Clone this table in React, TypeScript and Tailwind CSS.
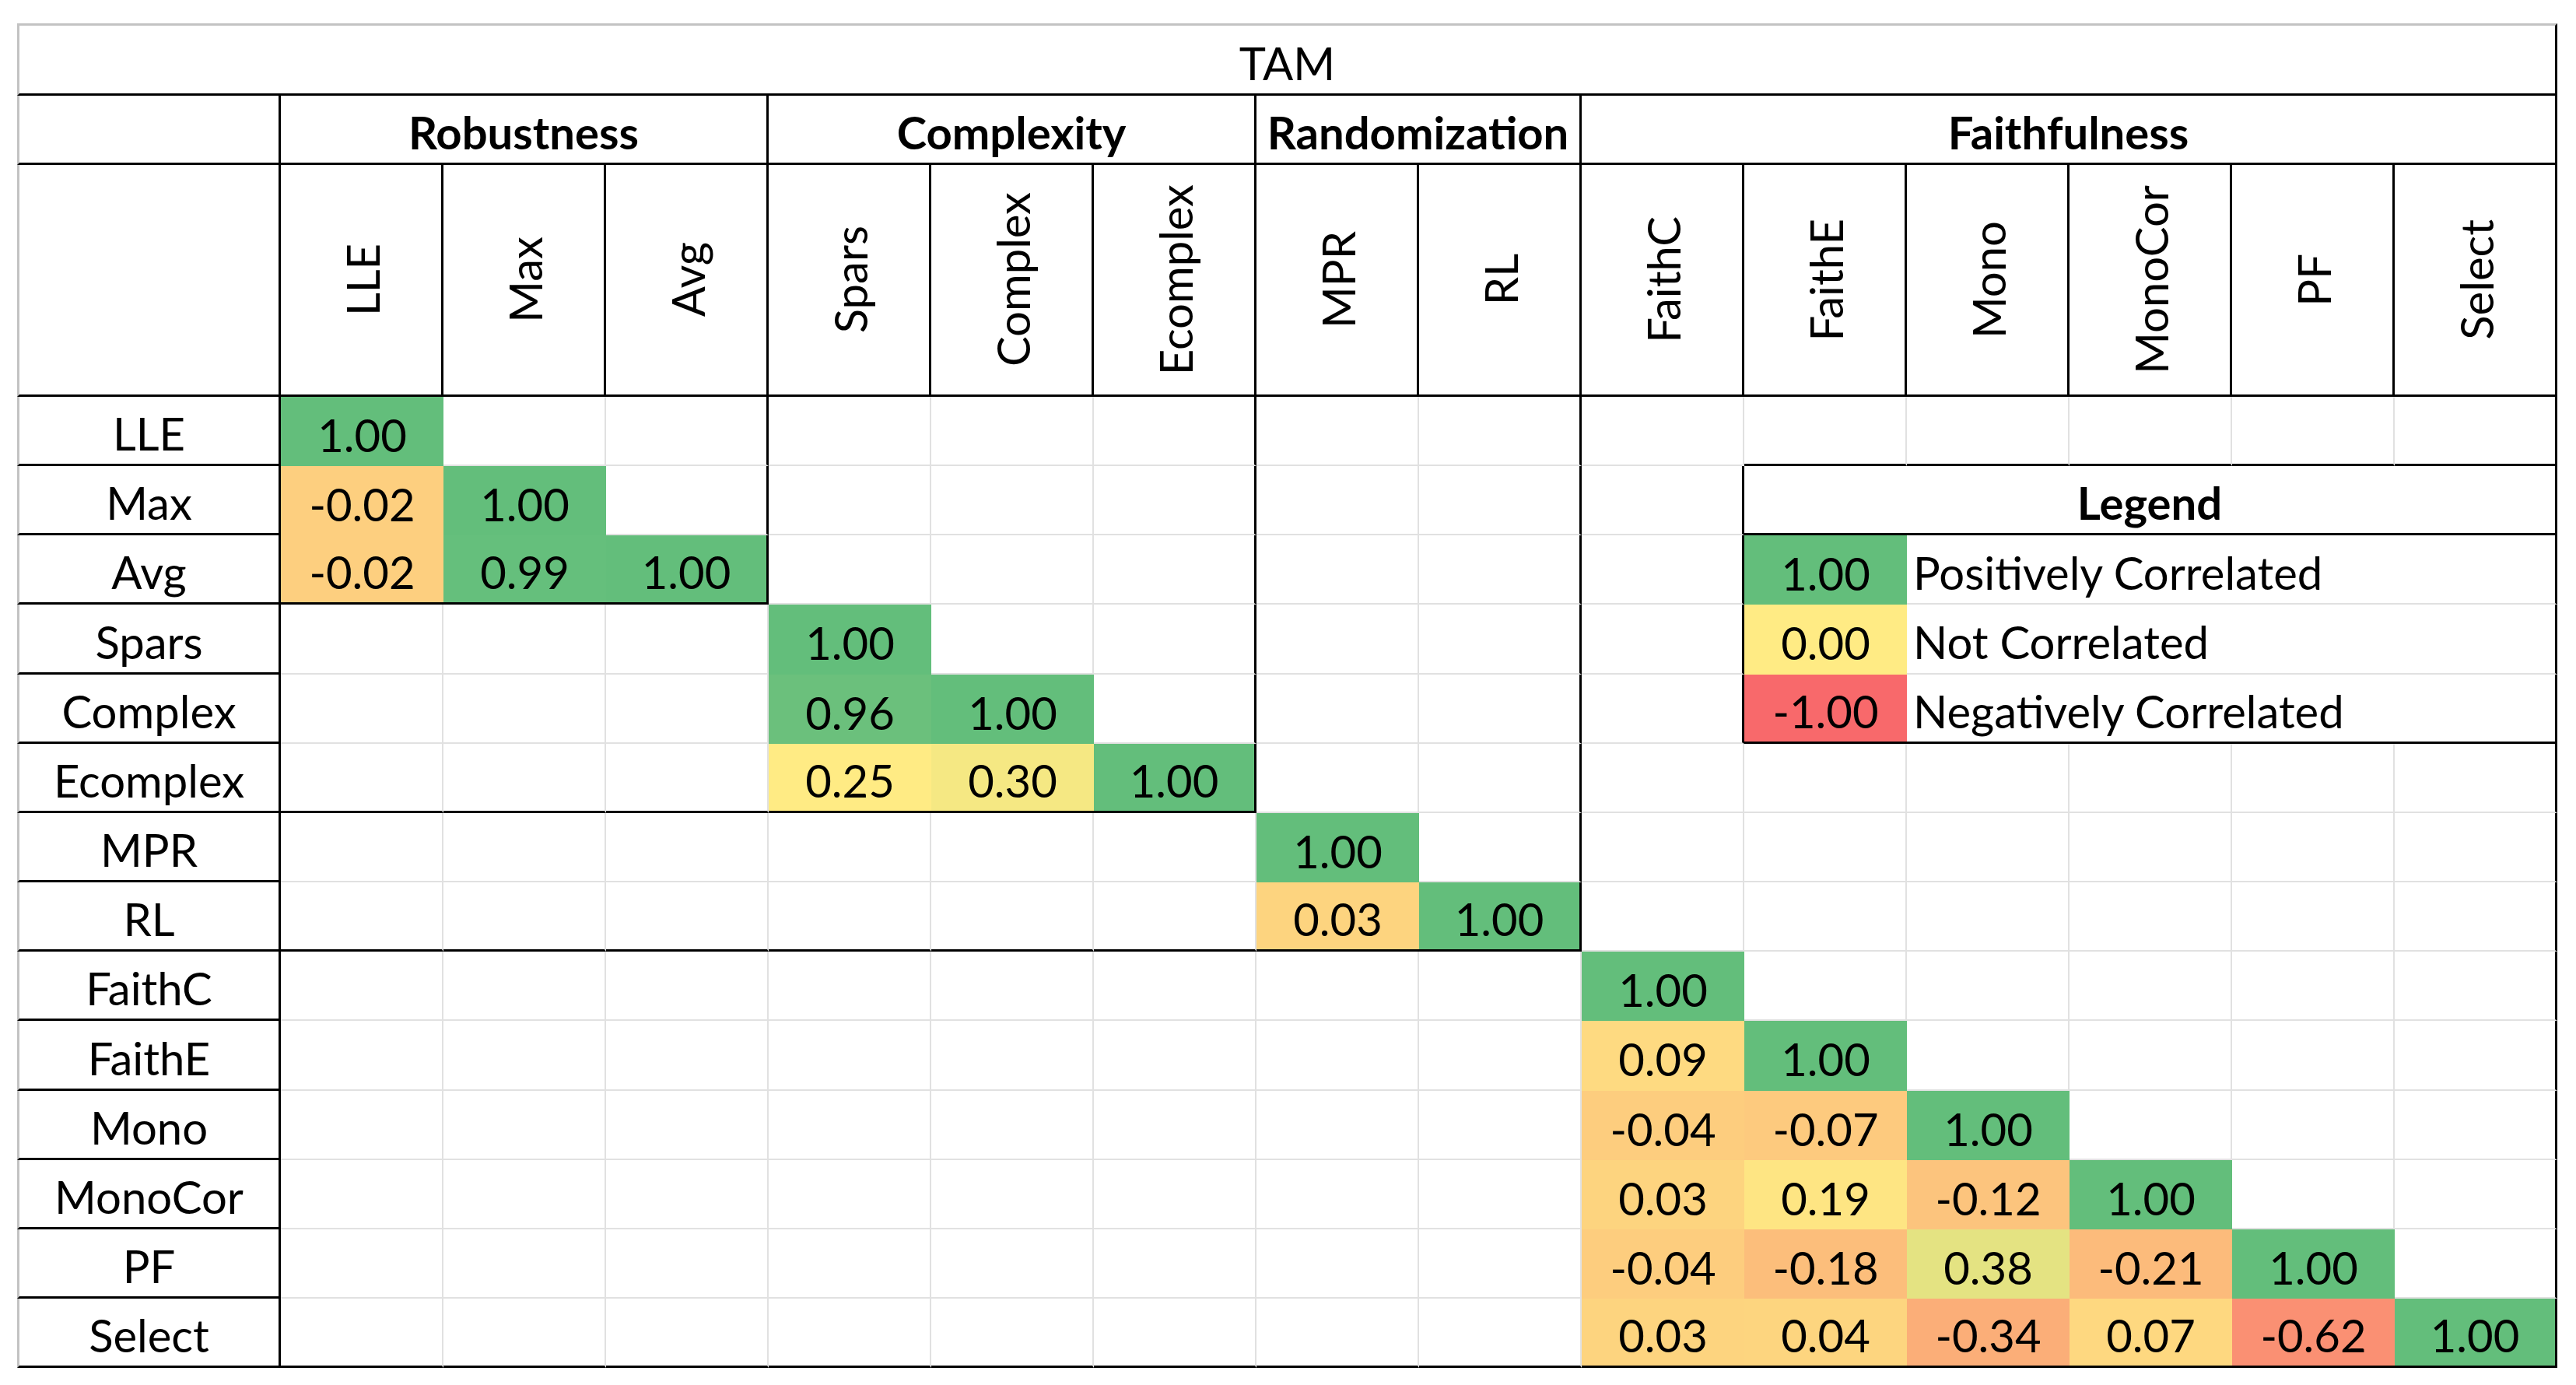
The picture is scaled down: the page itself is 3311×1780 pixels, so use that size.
const ROWS = [
  "LLE",
  "Max",
  "Avg",
  "Spars",
  "Complex",
  "Ecomplex",
  "MPR",
  "RL",
  "FaithC",
  "FaithE",
  "Mono",
  "MonoCor",
  "PF",
  "Select",
];

const GROUPS = [
  { name: "Robustness", start: 0, end: 2, span: "col-span-3" },
  { name: "Complexity", start: 3, end: 5, span: "col-span-3" },
  { name: "Randomization", start: 6, end: 7, span: "col-span-2" },
  { name: "Faithfulness", start: 8, end: 13, span: "col-span-6" },
];

// lower triangle of each block, first entry is the group's first column
const VALUES: string[][] = [
  ["1.00"],
  ["-0.02", "1.00"],
  ["-0.02", "0.99", "1.00"],
  ["1.00"],
  ["0.96", "1.00"],
  ["0.25", "0.30", "1.00"],
  ["1.00"],
  ["0.03", "1.00"],
  ["1.00"],
  ["0.09", "1.00"],
  ["-0.04", "-0.07", "1.00"],
  ["0.03", "0.19", "-0.12", "1.00"],
  ["-0.04", "-0.18", "0.38", "-0.21", "1.00"],
  ["0.03", "0.04", "-0.34", "0.07", "-0.62", "1.00"],
];

// colour scale fills, one per value
const FILL: Record<string, string> = {
  "1.00": "bg-[#63be7b]",
  "0.99": "bg-[#65bf7c]",
  "0.96": "bg-[#6bc07c]",
  "0.38": "bg-[#e4e382]",
  "0.30": "bg-[#f5e883]",
  "0.25": "bg-[#ffeb84]",
  "0.19": "bg-[#fee583]",
  "0.09": "bg-[#feda81]",
  "0.07": "bg-[#fed880]",
  "0.04": "bg-[#fdd57f]",
  "0.03": "bg-[#fdd47f]",
  "-0.02": "bg-[#fdcf7f]",
  "-0.04": "bg-[#fdcd7e]",
  "-0.07": "bg-[#fdca7e]",
  "-0.12": "bg-[#fcc47d]",
  "-0.18": "bg-[#fcbe7b]",
  "-0.21": "bg-[#fcbb7b]",
  "-0.34": "bg-[#fbae78]",
  "-0.62": "bg-[#fa9073]",
};

const LEGEND = [
  { value: "1.00", label: "Positively Correlated", fill: "bg-[#63be7b]" },
  { value: "0.00", label: "Not Correlated", fill: "bg-[#ffeb84]" },
  { value: "-1.00", label: "Negatively Correlated", fill: "bg-[#f8696b]" },
];

const R_BLACK = "border-r-[3px] border-r-black";
const R_GRAY = "border-r-2 border-r-[#e1e1e1]";
const B_BLACK = "border-b-[3px] border-b-black";
const B_GRAY = "border-b-2 border-b-[#e1e1e1]";
const LEFT_EDGE = "border-l-[3px] border-l-[#c3c3c3]";
const TEXT = "flex items-center justify-center pt-[8px] whitespace-nowrap";

const groupOf = (r: number) => GROUPS.find((g) => r >= g.start && r <= g.end)!;

const valueAt = (r: number, c: number) => {
  const g = groupOf(r);
  if (c < g.start || c > r) return null;
  return VALUES[r][c - g.start];
};

const rightBlack = (r: number, c: number) =>
  GROUPS.some((g) => g.end === c && r <= g.end) || (c === 8 && r >= 1 && r <= 4);

const bottomBlack = (r: number, c: number) =>
  GROUPS.some((g) => g.end === r && c <= g.end) || (r === 0 && c >= 9);

const DataCell = ({ r, c }: { r: number; c: number }) => {
  const v = valueAt(r, c);
  const right = rightBlack(r, c) ? R_BLACK : v ? "" : R_GRAY;
  const bottom = bottomBlack(r, c) ? B_BLACK : v ? "" : B_GRAY;
  return (
    <div className={`${TEXT} ${right} ${bottom} ${v ? FILL[v] : "bg-white"}`}>
      {v}
    </div>
  );
};

const App = () => {
  return (
    <div className="w-[3311px] h-[1780px] bg-white pl-[22px] pt-[30px] text-black text-[58px] leading-none [font-family:Lato,'Liberation_Sans',sans-serif]">
      <div className="grid w-max grid-cols-[339px_repeat(14,209px)] grid-rows-[93px_89px_298px_89px_89px_89px_90px_89px_89px_89px_89px_89px_90px_89px_89px_89px_89px]">
        {/* Title */}
        <div
          className={`col-span-15 border-t-[3px] border-t-[#c3c3c3] ${LEFT_EDGE} ${R_BLACK} ${B_BLACK} ${TEXT}`}
        >
          TAM
        </div>

        {/* Groups */}
        <div className={`${LEFT_EDGE} ${R_BLACK} ${B_BLACK}`} />
        {GROUPS.map((g) => (
          <div key={g.name} className={`${g.span} ${R_BLACK} ${B_BLACK} ${TEXT} font-bold`}>
            {g.name}
          </div>
        ))}

        {/* Column headers */}
        <div className={`${LEFT_EDGE} ${R_BLACK} ${B_BLACK}`} />
        {ROWS.map((name) => (
          <div key={name} className={`${R_BLACK} ${B_BLACK} flex items-center justify-center`}>
            <span className="[writing-mode:vertical-rl] rotate-180 whitespace-nowrap ml-[3px]">
              {name}
            </span>
          </div>
        ))}

        {/* Matrix */}
        {ROWS.map((name, r) => {
          const legendRow = r >= 1 && r <= 4;
          const cols = legendRow ? 9 : 14;
          return [
            <div key={`l-${name}`} className={`${LEFT_EDGE} ${R_BLACK} ${B_BLACK} ${TEXT}`}>
              {name}
            </div>,
            ...Array.from({ length: cols }, (_, c) => <DataCell key={`${r}-${c}`} r={r} c={c} />),
            ...(r === 1
              ? [
                  <div key="legend" className={`col-span-5 ${R_BLACK} ${B_BLACK} ${TEXT} font-bold`}>
                    Legend
                  </div>,
                ]
              : []),
            ...(r >= 2 && r <= 4
              ? [
                  <div
                    key={`lv-${r}`}
                    className={`${TEXT} ${LEGEND[r - 2].fill} ${r === 4 ? B_BLACK : ""}`}
                  >
                    {LEGEND[r - 2].value}
                  </div>,
                  <div
                    key={`lt-${r}`}
                    className={`col-span-4 flex items-center justify-start pl-[8px] pt-[8px] whitespace-nowrap ${R_BLACK} ${
                      r === 4 ? B_BLACK : B_GRAY
                    }`}
                  >
                    {LEGEND[r - 2].label}
                  </div>,
                ]
              : []),
          ];
        })}
      </div>
    </div>
  );
};

export default App;
